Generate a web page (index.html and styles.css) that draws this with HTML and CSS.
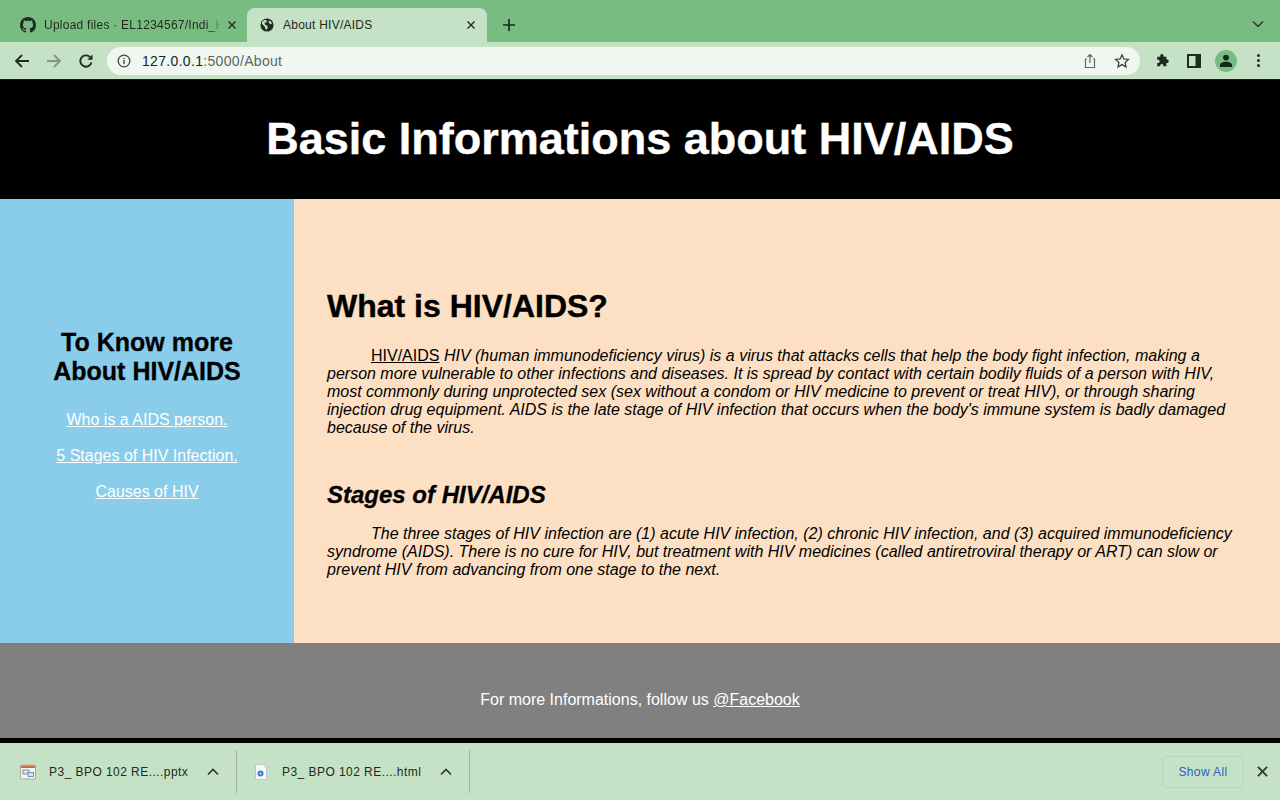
FILE: index.html
```html
<!DOCTYPE html>
<html lang="en">

<head>
    <meta charset="UTF-8">
    <title>About HIV/AIDS</title>
    <link rel="stylesheet" href="styles.css">
</head>

<body>
    <!-- browser tabs -->
    <div class="tabstrip">
        <div class="tab">
            <svg class="favicon" viewBox="0 0 16 16"><path fill="#1f2a22" d="M8 0C3.58 0 0 3.58 0 8c0 3.54 2.29 6.53 5.47 7.59.4.07.55-.17.55-.38 0-.19-.01-.82-.01-1.49-2.01.37-2.53-.49-2.69-.94-.09-.23-.48-.94-.82-1.13-.28-.15-.68-.52-.01-.53.63-.01 1.08.58 1.23.82.72 1.21 1.87.87 2.33.66.07-.52.28-.87.51-1.07-1.78-.2-3.64-.89-3.64-3.95 0-.87.31-1.59.82-2.15-.08-.2-.36-1.02.08-2.12 0 0 .67-.21 2.2.82.64-.18 1.32-.27 2-.27s1.36.09 2 .27c1.53-1.04 2.2-.82 2.2-.82.44 1.1.16 1.92.08 2.12.51.56.82 1.27.82 2.15 0 3.07-1.87 3.75-3.65 3.95.29.25.54.73.54 1.48 0 1.07-.01 1.93-.01 2.2 0 .21.15.46.55.38A8.01 8.01 0 0 0 16 8c0-4.42-3.58-8-8-8z"/></svg>
            <span class="tab-title tab-fade">Upload files · EL1234567/Indi_H</span>
            <svg class="tab-close" viewBox="0 0 8 8"><path d="M.5.5l7 7M7.500.5l-7 7" stroke="#1f2a22" stroke-width="1.400"/></svg>
        </div>
        <div class="tab tab-active">
            <svg class="favicon" viewBox="0 0 16 16"><circle cx="8" cy="8" r="7.500" fill="#1f2a22"/><path fill="#c5e2c6" d="M3 3.500l3-1.500 2 1-1 2-2 .5 1 2.500 2 .5 1 2-1.500 3-1-.5-1-3-2-2-1.500-1.500zM10 2.500l3 2 .5 2-2 .5-1.500-2z"/></svg>
            <span class="tab-title">About HIV/AIDS</span>
            <svg class="tab-close" viewBox="0 0 8 8"><path d="M.5.5l7 7M7.500.5l-7 7" stroke="#1f2a22" stroke-width="1.400"/></svg>
        </div>
        <svg class="newtab" viewBox="0 0 12 12"><path d="M6 0v12M0 6h12" stroke="#1f2a22" stroke-width="1.700"/></svg>
        <svg class="tab-menu" viewBox="0 0 12 8"><path d="M1 1.500l5 5 5-5" fill="none" stroke="#2b3a30" stroke-width="1.500"/></svg>
    </div>

    <!-- address bar -->
    <div class="toolbar">
        <svg class="navicon" viewBox="0 0 16 16"><path d="M15 8H2M8 2L2 8l6 6" fill="none" stroke="#1f2a22" stroke-width="1.800"/></svg>
        <svg class="navicon" viewBox="0 0 16 16"><path d="M1 8h13M8 2l6 6-6 6" fill="none" stroke="#84968a" stroke-width="1.800"/></svg>
        <svg class="navicon" viewBox="0 0 16 16"><path d="M13.500 9.500A5.700 5.700 0 1 1 12 4" fill="none" stroke="#1f2a22" stroke-width="1.900"/><path d="M14.500 1.500v5.200H9.300z" fill="#1f2a22"/></svg>
        <div class="omnibox">
            <svg class="info" viewBox="0 0 14 14"><circle cx="7" cy="7" r="5.800" fill="none" stroke="#444" stroke-width="1.300"/><path d="M7 6v4.200M7 3.800v1.300" stroke="#444" stroke-width="1.400"/></svg>
            <span class="url"><b>127.0.0.1</b>:5000/About</span>
            <svg class="omni-icon" viewBox="0 0 14 16"><path d="M4 6H2.500v8.500h9V6H10M7 10V1.500M4.500 4L7 1.500 9.500 4" fill="none" stroke="#5f6a62" stroke-width="1.200"/></svg>
            <svg class="omni-icon" viewBox="0 0 16 16"><path d="M8 1.800l1.900 4.100 4.500.5-3.300 3 .9 4.500L8 11.600l-4 2.300.9-4.500-3.300-3 4.500-.5z" fill="none" stroke="#3c4640" stroke-width="1.300"/></svg>
        </div>
        <svg class="tool-icon puzzle" viewBox="0 0 16 16"><path fill="#1f2a22" d="M6 1.500a2 2 0 0 1 3.800 0V3H13v3.300h1.200a2 2 0 0 1 0 3.900H13V14H9.500v-1.200a1.800 1.800 0 0 0-3.500 0V14H2.500v-3.700h1a1.900 1.900 0 0 0 0-3.800h-1V3H6z"/></svg>
        <svg class="tool-icon panel" viewBox="0 0 14 14"><path fill="#1f2a22" fill-rule="evenodd" d="M0 0h14v14H0zM2 2v10h6.500V2z"/></svg>
        <div class="avatar">
            <svg viewBox="0 0 14 14"><circle cx="7" cy="3.600" r="2.900" fill="#15261b"/><path fill="#15261b" d="M1 13v-1.800C1 9 4 7.800 7 7.800s6 1.200 6 3.400V13z"/></svg>
        </div>
        <div class="dots"><i></i><i></i><i></i></div>
    </div>

    <!-- page -->
    <div class="page">
        <header class="banner">
            <h1>Basic Informations about HIV/AIDS</h1>
        </header>
        <div class="middle">
            <aside class="sidebar">
                <h2>To Know more About HIV/AIDS</h2>
                <a href="#">Who is a AIDS person.</a>
                <a href="#">5 Stages of HIV Infection.</a>
                <a href="#">Causes of HIV</a>
            </aside>
            <main class="content">
                <h2 class="what">What is HIV/AIDS?</h2>
                <p class="first"><a href="#">HIV/AIDS</a> HIV (human immunodeficiency virus) is a virus that attacks cells that help the body fight infection, making a person more vulnerable to other infections and diseases. It is spread by contact with certain bodily fluids of a person with HIV, most commonly during unprotected sex (sex without a condom or HIV medicine to prevent or treat HIV), or through sharing injection drug equipment. AIDS is the late stage of HIV infection that occurs when the body's immune system is badly damaged because of the virus.</p>
                <h3>Stages of HIV/AIDS</h3>
                <p>The three stages of HIV infection are (1) acute HIV infection, (2) chronic HIV infection, and (3) acquired immunodeficiency syndrome (AIDS). There is no cure for HIV, but treatment with HIV medicines (called antiretroviral therapy or ART) can slow or prevent HIV from advancing from one stage to the next.</p>
            </main>
        </div>
        <footer class="foot">For more Informations, follow us <a href="#">@Facebook</a></footer>
    </div>

    <!-- download shelf -->
    <div class="shelf">
        <div class="dl">
            <svg class="file-icon" viewBox="0 0 16 16"><rect x="0.500" y="1" width="15" height="14" rx="1" fill="#f4f4f0" stroke="#a9a9a0"/><path d="M1 1.500h14V4H1z" fill="#d9663f"/><rect x="3" y="6" width="6" height="4" fill="#d5e2ee" stroke="#5d7f9f" stroke-width=".8"/><rect x="8" y="8.500" width="5.500" height="4" fill="#d5e2ee" stroke="#5d7f9f" stroke-width=".8"/></svg>
            <span class="dl-name">P3_ BPO 102 RE....pptx</span>
            <svg class="caret" viewBox="0 0 12 8"><path d="M1 6.500l5-5 5 5" fill="none" stroke="#2b3a30" stroke-width="1.700"/></svg>
        </div>
        <div class="dl">
            <svg class="file-icon" viewBox="0 0 16 16"><path d="M2.500.5h7.500l3.500 3.500v11.500h-11z" fill="#f7f8f8" stroke="#c2c6c8"/><circle cx="7.500" cy="9.500" r="3" fill="#3f78d0"/><circle cx="7.500" cy="9.500" r="1.200" fill="#a8c6ef"/></svg>
            <span class="dl-name">P3_ BPO 102 RE....html</span>
            <svg class="caret" viewBox="0 0 12 8"><path d="M1 6.500l5-5 5 5" fill="none" stroke="#2b3a30" stroke-width="1.700"/></svg>
        </div>
        <div class="shelf-right">
            <span class="show-all">Show All</span>
            <svg class="shelf-close" viewBox="0 0 12 12"><path d="M1 1l10 10M11 1L1 11" stroke="#2b3a30" stroke-width="2"/></svg>
        </div>
    </div>
</body>

</html>
```

FILE: styles.css
```css
* {
    padding: 0;
    margin: 0;
    box-sizing: border-box;
}

body {
    width: 1280px;
    height: 800px;
    overflow: hidden;
    font-family: "Liberation Sans", Arial, sans-serif;
    background-color: #000;
    display: flex;
    flex-direction: column;
}

/* browser tabs */
.tabstrip {
    height: 42px;
    flex: none;
    background-color: #78bc82;
    display: flex;
    align-items: flex-end;
    padding-left: 8px;
}

.tab {
    width: 238px;
    height: 34px;
    display: flex;
    align-items: center;
    padding: 0 10px 0 12px;
    font-size: 12px;
    color: #1f2a22;
}

.tab-active {
    width: 240px;
    background-color: #c5e2c6;
    border-radius: 8px 8px 0 0;
    margin-left: 1px;
    padding: 0 12px 0 13px;
}

.favicon {
    width: 16px;
    height: 16px;
    flex: none;
    margin-right: 8px;
}

.tab-active .favicon {
    width: 14px;
    height: 14px;
    margin-right: 9px;
}

.tab-title {
    flex: 1;
    white-space: nowrap;
    letter-spacing: 0.25px;
}

/* long title fades out before the close button */
.tab-fade {
    -webkit-mask-image: linear-gradient(to right, #000 166px, transparent 177px);
    mask-image: linear-gradient(to right, #000 166px, transparent 177px);
}

.tab-close {
    width: 8px;
    height: 8px;
    flex: none;
}

.newtab {
    width: 12px;
    height: 12px;
    margin: 0 0 11px 16px;
}

.tab-menu {
    width: 12px;
    height: 8px;
    margin: 0 16px 14px auto;
}

/* address bar */
.toolbar {
    height: 37px;
    flex: none;
    background-color: #c5e2c6;
    display: flex;
    align-items: center;
    padding-left: 14px;
}

.navicon {
    width: 16px;
    height: 16px;
    margin-right: 16px;
}

.omnibox {
    width: 1033px;
    height: 28px;
    margin-left: -3px;
    background-color: #f0f7f1;
    border-radius: 14px;
    display: flex;
    align-items: center;
    padding: 0 10px 0 10px;
}

.info {
    width: 14px;
    height: 14px;
    margin-right: 11px;
}

.url {
    flex: 1;
    font-size: 14px;
    letter-spacing: 0.32px;
    color: #5b665e;
}

.url b {
    font-weight: normal;
    color: #1b241e;
}

.omni-icon {
    width: 16px;
    height: 16px;
    margin-left: 16px;
}

.tool-icon {
    width: 14px;
    height: 14px;
}

.puzzle {
    margin-left: 15px;
}

.panel {
    margin-left: 18px;
}

.avatar {
    width: 22px;
    height: 22px;
    border-radius: 50%;
    background-color: #78bc82;
    margin-left: 14px;
    display: flex;
    align-items: center;
    justify-content: center;
}

.avatar svg {
    width: 14px;
    height: 14px;
}

.dots {
    margin-left: 20px;
    display: flex;
    flex-direction: column;
    gap: 2px;
}

.dots i {
    display: block;
    width: 3px;
    height: 3px;
    border-radius: 50%;
    background-color: #1f2a22;
}

/* page */
.page {
    height: 659px;
    flex: none;
    display: flex;
    flex-direction: column;
    border-top: 1px solid #1a1a1a;
}

.banner {
    height: 119px;
    flex: none;
    padding-bottom: 2px;
    background-color: #000;
    color: #fff;
    text-align: center;
    display: flex;
    align-items: center;
    justify-content: center;
}

.banner h1 {
    font-size: 45px;
    -webkit-text-stroke: 0.4px #fff;
}

.middle {
    height: 444px;
    flex: none;
    display: flex;
}

.sidebar {
    width: 294px;
    flex: none;
    background-color: #89cdea;
    text-align: center;
    padding: 129px 40px 0;
}

.sidebar h2 {
    font-size: 25px;
    line-height: 29px;
    color: #000;
    margin: 0 -10px 25px;
    -webkit-text-stroke: 0.3px #000;
}

.sidebar a {
    display: block;
    color: #fff;
    font-size: 16px;
    line-height: 18px;
    margin: 0 -30px 18px;
}

.content {
    flex: 1;
    background-color: #fde0c3;
    padding: 89px 40px 0 33px;
}

.what {
    font-size: 32px;
    line-height: 37px;
    color: #000;
    margin-bottom: 22px;
    -webkit-text-stroke: 0.4px #000;
}

.content p {
    font-size: 16px;
    line-height: 18px;
    font-style: italic;
    color: #000;
    text-indent: 44px;
}

.content p a {
    color: #000;
    font-style: normal;
}

.first {
    margin-bottom: 44px;
}

.content h3 {
    font-size: 24px;
    line-height: 28px;
    font-style: italic;
    color: #000;
    margin-bottom: 16px;
    -webkit-text-stroke: 0.3px #000;
}

.foot {
    height: 95px;
    flex: none;
    background-color: #808080;
    color: #fff;
    font-size: 16px;
    text-align: center;
    padding-top: 48px;
    line-height: 18px;
}

.foot a {
    color: #fff;
}

/* download shelf */
.shelf {
    height: 57px;
    flex: none;
    margin-top: 5px;
    background-color: #c5e2c6;
    display: flex;
    align-items: center;
    font-size: 12px;
    color: #1f2a22;
    padding-left: 20px;
}

.dl {
    height: 43px;
    display: flex;
    align-items: center;
    width: 217px;
    border-right: 1px solid #9db5a0;
}

.dl + .dl {
    width: 233px;
    padding-left: 16px;
}

.file-icon {
    width: 16px;
    height: 16px;
    margin-right: 13px;
}

.dl-name {
    width: 146px;
    white-space: nowrap;
    font-size: 12px;
    letter-spacing: 0.45px;
    padding-top: 1px;
}

.caret {
    width: 12px;
    height: 8px;
    margin-left: 12px;
}

.shelf-right {
    margin-left: auto;
    display: flex;
    align-items: center;
}

.show-all {
    width: 82px;
    height: 32px;
    border: 1px solid #b9d6bc;
    border-radius: 4px;
    color: #2f5fc0;
    text-align: center;
    line-height: 30px;
    font-size: 12px;
    letter-spacing: 0.4px;
}

.shelf-close {
    width: 11px;
    height: 11px;
    margin: 0 12px 0 13px;
}
```
